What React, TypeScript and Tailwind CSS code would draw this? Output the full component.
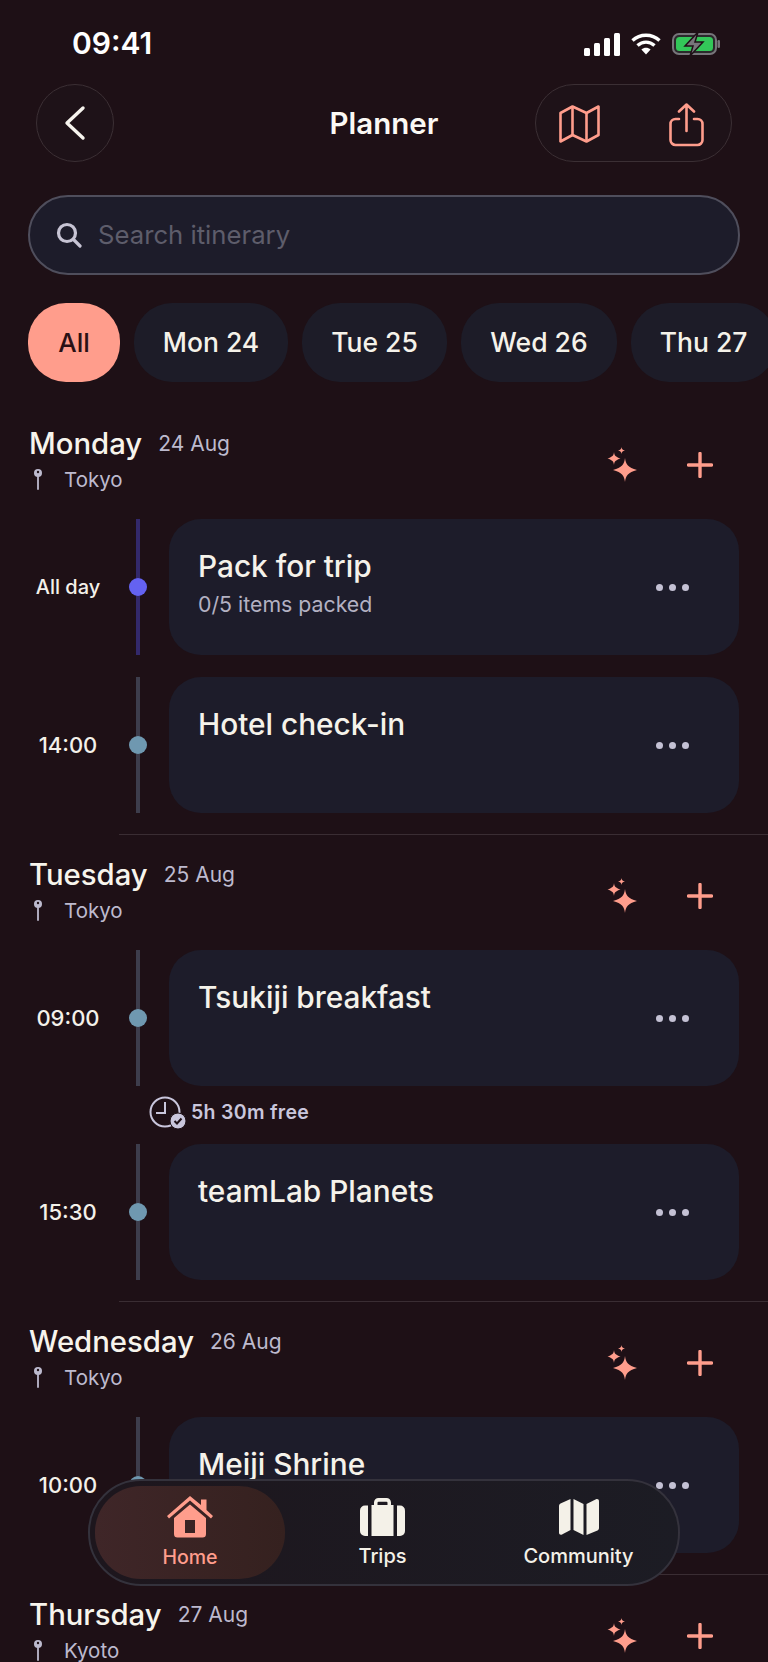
import { Fragment } from "react";

const PEACH = "#ff9d8c";

type PlanItem = { time: string; title: string; note?: string; free?: string; allDay?: boolean };
type Day = { name: string; date: string; city: string; items: PlanItem[] };

const DAYS: Day[] = [
  {
    name: "Monday",
    date: "24 Aug",
    city: "Tokyo",
    items: [
      { time: "All day", title: "Pack for trip", note: "0/5 items packed", allDay: true },
      { time: "14:00", title: "Hotel check-in" },
    ],
  },
  {
    name: "Tuesday",
    date: "25 Aug",
    city: "Tokyo",
    items: [
      { time: "09:00", title: "Tsukiji breakfast", free: "5h 30m free" },
      { time: "15:30", title: "teamLab Planets" },
    ],
  },
  {
    name: "Wednesday",
    date: "26 Aug",
    city: "Tokyo",
    items: [{ time: "10:00", title: "Meiji Shrine" }],
  },
  { name: "Thursday", date: "27 Aug", city: "Kyoto", items: [] },
];

const CHIPS = [
  { label: "Mon 24", width: "w-[154px]" },
  { label: "Tue 25", width: "w-[145px]" },
  { label: "Wed 26", width: "w-[156px]" },
  { label: "Thu 27", width: "w-[145px]" },
];

function StatusBar() {
  return (
    <div className="flex h-[84px] shrink-0 items-start justify-between pl-[72px] pr-[48px] pt-[24px]">
      <span className="text-[30px] font-semibold leading-[38px] text-white">09:41</span>
      <div className="mt-[8px] flex items-center gap-[10px]">
        <svg width="36" height="23" viewBox="0 0 36 23" fill="white">
          <rect x="0" y="15" width="6" height="8" rx="1.5" />
          <rect x="10" y="10" width="6" height="13" rx="1.5" />
          <rect x="20" y="5" width="6" height="18" rx="1.5" />
          <rect x="30" y="0" width="6" height="23" rx="1.5" />
        </svg>
        <svg width="32" height="22" viewBox="0 0 30 22" fill="none" stroke="white" strokeWidth="3.4">
          <path d="M1.5 7.5C9 .5 21 .5 28.5 7.5" />
          <path d="M6.5 12.5c5-4.500 12-4.500 17 0" />
          <path d="M15 21.5l-4.600-5c2.600-2.200 6.600-2.200 9.200 0z" fill="white" stroke="none" />
        </svg>
        <svg width="48" height="24" viewBox="0 0 48 24" fill="none">
          <rect x="1" y="2" width="43" height="20" rx="6" fill="#2b2a2c" stroke="#77757a" strokeWidth="2" />
          <rect x="4" y="5" width="37" height="14" rx="3.5" fill="#33c759" />
          <rect x="45.5" y="8" width="2.5" height="8" rx="1.2" fill="#77757a" />
          <path d="M26 0L13 14h8l-3 10 13-14h-8z" fill="#77757a" stroke="#1e1016" strokeWidth="1.5" />
        </svg>
      </div>
    </div>
  );
}

function Header() {
  return (
    <div className="grid h-[78px] shrink-0 grid-cols-[1fr_auto_1fr] items-center px-[36px]">
      <div className="flex h-[78px] w-[78px] items-center justify-center rounded-full border border-[#3b2f34] bg-[#1e1218]">
        <svg width="24" height="36" viewBox="0 0 24 36" fill="none" stroke="#f7f4ee" strokeWidth="3.4" strokeLinecap="round" strokeLinejoin="round">
          <path d="M20 3L4 18l16 15" />
        </svg>
      </div>
      <span className="text-[29.5px] font-semibold text-[#fbf9f4]">Planner</span>
      <div className="flex h-[78px] w-[197px] items-center justify-between justify-self-end rounded-full border border-[#3b2f34] bg-[#1e1218] pl-[23px] pr-[27px]">
        <svg className="mt-[2px]" width="41" height="38" viewBox="0 0 41 38" fill="none" stroke={PEACH} strokeWidth="2.6" strokeLinejoin="round">
          <path d="M1.5 8L13.5 1.5l14 6.5 12-6.5v28.5l-12 6.5-14-6.5-12 6.5z" />
          <path d="M13.5 1.5v28.5M27.5 8v28.5" />
        </svg>
        <svg className="mt-[4px]" width="35" height="44" viewBox="0 0 35 44" fill="none" stroke={PEACH} strokeWidth="2.6" strokeLinecap="round" strokeLinejoin="round">
          <path d="M17.5 28V2M10 8.5L17.5 1.5 25 8.5" />
          <path d="M10 16H6.500a5 5 0 0 0-5 5v16a5 5 0 0 0 5 5h22a5 5 0 0 0 5-5V21a5 5 0 0 0-5-5H25" />
        </svg>
      </div>
    </div>
  );
}

function SearchBar() {
  return (
    <div className="mx-[28px] mt-[33px] flex h-[80px] shrink-0 items-center rounded-[40px] border-2 border-[#4f4e5c] bg-[#1d1c2a] pl-[26px]">
      <svg width="26" height="26" viewBox="0 0 26 26" fill="none" stroke="#c7c4d4" strokeWidth="3.2" strokeLinecap="round">
        <circle cx="11" cy="11" r="8.5" />
        <path d="M17.5 17.5L24 24" />
      </svg>
      <span className="ml-[16px] text-[25.7px] text-[#5e5d6b]">Search itinerary</span>
    </div>
  );
}

function DayChips() {
  return (
    <div className="mt-[28px] flex h-[79px] shrink-0 gap-[14px] pl-[28px]">
      <div className="flex w-[92px] shrink-0 items-center justify-center rounded-[38px] bg-[#ff9d8c] text-[26px] font-medium text-[#2a1014]">
        All
      </div>
      {CHIPS.map((chip) => (
        <div
          key={chip.label}
          className={`flex ${chip.width} shrink-0 items-center justify-center rounded-[38px] bg-[#1d1c28] text-[26.5px] font-medium text-[#f5f2ea]`}
        >
          {chip.label}
        </div>
      ))}
    </div>
  );
}

function Sparkles() {
  return (
    <svg width="30" height="35" viewBox="0 0 30 35" fill={PEACH}>
      <path d="M18 11c.8 6.500 3 9.500 12 12-9 2.500-11.200 5.500-12 12-.8-6.500-3-9.500-12-12 9-2.500 11.200-5.500 12-12z" />
      <path d="M7 5c.3 3.500 1.500 4.800 6.500 6.500C8.500 13.200 7.300 14.500 7 18c-.3-3.500-1.500-4.800-6.500-6.500C5.500 9.800 6.700 8.500 7 5z" />
      <path d="M14.500 0c.2 2 .8 2.700 3.500 3.500-2.700.8-3.300 1.500-3.500 3.500-.2-2-.8-2.700-3.500-3.500C13.700 2.700 14.300 2 14.500 0z" />
    </svg>
  );
}

function DayHeader({ day }: { day: Day }) {
  return (
    <div className="flex h-[115px] items-start justify-between pl-[29px] pr-[55px] pt-[22px]">
      <div>
        <div className="flex h-[36px] items-center">
          <span className="text-[29.3px] font-medium text-[#f7f4ec]">{day.name}</span>
          <span className="ml-[16px] text-[21px] text-[#bdbace]">{day.date}</span>
        </div>
        <div className="mt-[1px] flex h-[34px] items-center pl-[3px]">
          <svg className="-mt-[3px]" width="12" height="22" viewBox="0 0 12 22" fill="none">
            <circle cx="6" cy="5" r="4" fill="#bdbace" />
            <circle cx="6" cy="4" r="1.200" fill="#1e1016" />
            <path d="M6 9v12" stroke="#bdbace" strokeWidth="1.800" strokeLinecap="round" />
          </svg>
          <span className="ml-[20px] text-[20.5px] text-[#bdbace]">{day.city}</span>
        </div>
      </div>
      <div className="mt-[21px] flex items-center gap-[50px]">
        <Sparkles />
        <svg width="26" height="26" viewBox="0 0 26 26" fill="none" stroke={PEACH} strokeWidth="3.400" strokeLinecap="round">
          <path d="M13 1.500v23M1.500 13h23" />
        </svg>
      </div>
    </div>
  );
}

function PlanRow({ item }: { item: PlanItem }) {
  return (
    <div className="flex h-[136px]">
      <div className={`flex w-[136px] items-center justify-center ${item.allDay ? "text-[20px]" : "text-[22px]"} font-medium text-[#f4f1ea]`}>
        {item.time}
      </div>
      <div className={`relative w-[4px] ${item.allDay ? "bg-[#33296b]" : "bg-[#3d3d4c]"}`}>
        <div className={`absolute left-[-7px] top-[59px] h-[18px] w-[18px] rounded-full ${item.allDay ? "bg-[#6462f1]" : "bg-[#6f98b0]"}`} />
      </div>
      <div className="relative ml-[29px] w-[570px] rounded-[32px] bg-[#1d1c2a] pl-[29px] pt-[27px]">
        <div className="text-[29.8px] font-medium leading-[40px] text-[#f5f2ea]">{item.title}</div>
        {item.note && <div className="mt-[4px] text-[21.300px] leading-[28px] text-[#b3b1c2]">{item.note}</div>}
        <div className="absolute right-[50px] top-[65px] flex gap-[6px]">
          <div className="h-[7px] w-[7px] rounded-full bg-[#c4c1d4]" />
          <div className="h-[7px] w-[7px] rounded-full bg-[#c4c1d4]" />
          <div className="h-[7px] w-[7px] rounded-full bg-[#c4c1d4]" />
        </div>
      </div>
    </div>
  );
}

function FreeGap({ label }: { label: string }) {
  return (
    <div className="flex h-[58px] items-center pb-[5px] pl-[149px]">
      <svg width="37" height="33" viewBox="0 0 37 33" fill="none">
        <circle cx="16" cy="16" r="14.500" stroke="#c9c6dc" strokeWidth="2" />
        <path d="M16 6v11H7" stroke="#c9c6dc" strokeWidth="2" />
        <circle cx="29" cy="25" r="8" fill="#c9c6dc" stroke="#1e1016" strokeWidth="1" />
        <path d="M25.500 25l2.500 2.500 4.500-5" stroke="#1e1016" strokeWidth="2" />
      </svg>
      <span className="ml-[5px] text-[19.500px] font-semibold tracking-[0.3px] text-[#c9c6dc]">{label}</span>
    </div>
  );
}

function NavIcon({ name }: { name: string }) {
  if (name === "Home") {
    return (
      <svg width="46" height="42" viewBox="0 0 46 42" fill={PEACH}>
        <path d="M23 0L34 9V3.500h5.500v10.400L46 20l-2 2.400L23 4.500 2 22.400 0 20z" />
        <path fillRule="evenodd" d="M23 8.500L39 22v16a3.500 3.500 0 0 1-3.500 3.500h-25A3.500 3.500 0 0 1 7 38V22zM18 24v13h10V24z" />
      </svg>
    );
  }
  if (name === "Trips") {
    return (
      <svg width="45" height="38" viewBox="0 0 45 38" fill="#f4f1e8">
        <path fillRule="evenodd" d="M14 7V4.500A4.500 4.500 0 0 1 18.500 0h8A4.500 4.500 0 0 1 31 4.500V7h2.500v31h-22V7zM17.500 7h10V4.800a1 1 0 0 0-1-1h-8a1 1 0 0 0-1 1z" />
        <path d="M8 7.500V38H5a5 5 0 0 1-5-5V12.500a5 5 0 0 1 5-5z" />
        <path d="M37 7.500V38h3a5 5 0 0 0 5-5V12.500a5 5 0 0 0-5-5z" />
      </svg>
    );
  }
  return (
    <svg width="40" height="38" viewBox="0 0 40 38" fill="#f4f1e8">
      <path d="M11.500 1v31L3 36.500c-1.500.7-3 0-3-2V8c0-1 .6-2 1.500-2.500z" />
      <path d="M14.500 1L24.500 6v31l-10-5z" />
      <path d="M27.500 6L37 1.300c1.500-.7 3 .2 3 2V30c0 1-.6 2-1.500 2.500L27.500 37z" />
    </svg>
  );
}

function BottomNav() {
  return (
    <div className="absolute left-[88px] top-[1479px] flex h-[107px] w-[592px] items-center rounded-[53px] border-2 border-[#34323c] bg-gradient-to-r from-[#1d161d] to-[#1c1c24] pl-[5px]">
      <div className="flex h-[93px] w-[190px] flex-col items-center justify-center rounded-[46px] bg-gradient-to-r from-[#3f2628] to-[#35211f]">
        <NavIcon name="Home" />
        <span className="mt-[6px] text-[19.5px] font-medium leading-[26px] text-[#ff9d8c]">Home</span>
      </div>
      <div className="flex w-[195px] flex-col items-center pt-[2px]">
        <NavIcon name="Trips" />
        <span className="mt-[7px] text-[20px] font-medium leading-[26px] text-[#f4f1e8]">Trips</span>
      </div>
      <div className="flex w-[197px] flex-col items-center pt-[2px]">
        <NavIcon name="Community" />
        <span className="mt-[7px] text-[20px] font-medium leading-[26px] text-[#f4f1e8]">Community</span>
      </div>
    </div>
  );
}

export default function App() {
  return (
    <div className="relative flex h-[1662px] w-[768px] flex-col overflow-hidden bg-[#1e1016] [font-family:Inter,sans-serif]">
      <StatusBar />
      <Header />
      <SearchBar />
      <DayChips />
      <div className="mt-[22px]">
        {DAYS.map((day, dayIndex) => (
          <div key={day.name} className={dayIndex > 0 ? "relative mt-[21px]" : "relative"}>
            {dayIndex > 0 && <div className="ml-[119px] h-px bg-[#3a2d33]" />}
            <DayHeader day={day} />
            {day.items.map((item, i) => (
              <Fragment key={item.title}>
                <PlanRow item={item} />
                {item.free && <FreeGap label={item.free} />}
                {!item.free && i < day.items.length - 1 && <div className="h-[22px]" />}
              </Fragment>
            ))}
          </div>
        ))}
      </div>
      <BottomNav />
    </div>
  );
}
